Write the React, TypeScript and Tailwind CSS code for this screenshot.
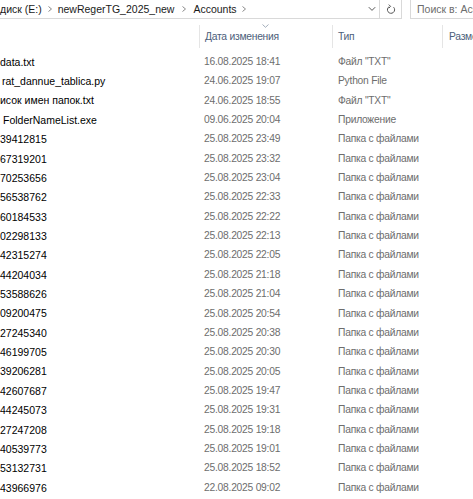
import React from "react";

const rows: [string, string, string, string][] = [
  ["data.txt", "16.08.2025 18:41", 'Файл "TXT"', "ml-0"],
  ["rat_dannue_tablica.py", "24.06.2025 19:07", "Python File", "ml-[2px]"],
  ["исок имен папок.txt", "24.06.2025 18:55", 'Файл "TXT"', "ml-0"],
  ["FolderNameList.exe", "09.06.2025 20:04", "Приложение", "ml-[3px]"],
  ["39412815", "25.08.2025 23:49", "Папка с файлами", "ml-0"],
  ["67319201", "25.08.2025 23:32", "Папка с файлами", "ml-0"],
  ["70253656", "25.08.2025 23:04", "Папка с файлами", "ml-0"],
  ["56538762", "25.08.2025 22:33", "Папка с файлами", "ml-0"],
  ["60184533", "25.08.2025 22:22", "Папка с файлами", "ml-0"],
  ["02298133", "25.08.2025 22:13", "Папка с файлами", "ml-0"],
  ["42315274", "25.08.2025 22:05", "Папка с файлами", "ml-0"],
  ["44204034", "25.08.2025 21:18", "Папка с файлами", "ml-0"],
  ["53588626", "25.08.2025 21:04", "Папка с файлами", "ml-0"],
  ["09200475", "25.08.2025 20:54", "Папка с файлами", "ml-0"],
  ["27245340", "25.08.2025 20:38", "Папка с файлами", "ml-0"],
  ["46199705", "25.08.2025 20:30", "Папка с файлами", "ml-0"],
  ["39206281", "25.08.2025 20:05", "Папка с файлами", "ml-0"],
  ["42607687", "25.08.2025 19:47", "Папка с файлами", "ml-0"],
  ["44245073", "25.08.2025 19:31", "Папка с файлами", "ml-0"],
  ["27247208", "25.08.2025 19:18", "Папка с файлами", "ml-0"],
  ["40539773", "25.08.2025 19:01", "Папка с файлами", "ml-0"],
  ["53132731", "25.08.2025 18:52", "Папка с файлами", "ml-0"],
  ["43966976", "22.08.2025 09:02", "Папка с файлами", "ml-0"],
];

function Chevron() {
  return (
    <svg width="6" height="8" viewBox="0 0 6 8" className="shrink-0">
      <path d="M1.5 1.5 L4.5 4 L1.5 6.5" fill="none" stroke="#8a8a8a" strokeWidth="1" />
    </svg>
  );
}

export default function App() {
  return (
    <div
      className="w-[473px] h-[499px] bg-white overflow-hidden text-[10.3px] leading-none tracking-[-0.25px]"
      style={{ fontFamily: '"Segoe UI", "Liberation Sans", Arial, sans-serif' }}
    >
      {/* Top bar */}
      <div className="flex h-[19px] items-stretch">
        <div className="flex w-[402px] items-center border-b border-r border-[#d9d9d9] text-[#1a1a1a] text-[10.5px] tracking-normal">
          <span className="whitespace-nowrap">диск (E:)</span>
          <span className="ml-[5px] mr-[5px]"><Chevron /></span>
          <span className="whitespace-nowrap">newRegerTG_2025_new</span>
          <span className="ml-[7px] mr-[6px]"><Chevron /></span>
          <span className="whitespace-nowrap">Accounts</span>
          <span className="ml-[4px]"><Chevron /></span>
          <div className="flex-1" />
          <svg width="8" height="6" viewBox="0 0 8 6" className="mr-[3px]">
            <path d="M0.8 1.2 L4 4.4 L7.2 1.2" fill="none" stroke="#555" strokeWidth="1" />
          </svg>
          <div className="h-full w-px bg-[#d9d9d9]" />
          <div className="flex w-[21px] items-center justify-center">
            <svg width="10" height="11" viewBox="0 0 10 11">
              <path d="M7.6 3.2 A3.6 3.6 0 1 1 3.2 2.6" fill="none" stroke="#555" strokeWidth="1" />
              <path d="M2.8 0.6 L4.6 2.4 L2.8 4.2" fill="none" stroke="#555" strokeWidth="1" />
            </svg>
          </div>
        </div>
        <div className="w-[8px]" />
        <div className="flex flex-1 items-center border border-t-0 border-r-0 border-[#d9d9d9] pl-[6px] text-[#6d6d6d] text-[10.5px] tracking-normal whitespace-nowrap overflow-hidden">
          Поиск в: Accounts
        </div>
      </div>

      {/* Header */}
      <div className="relative mt-[6px] flex h-[23px] items-center text-[#4c607a]">
        <div className="w-[199px]" />
        <div className="relative flex h-full w-[133px] items-center border-l border-[#e5e5e5] pl-[5px]">
          <span className="pt-[2px]">Дата изменения</span>
          <svg width="7" height="4" viewBox="0 0 7 4" className="absolute left-[62px] top-[-1px]">
            <path d="M0.5 0.5 L3.5 3.3 L6.5 0.5" fill="none" stroke="#9aa5b3" strokeWidth="0.9" />
          </svg>
        </div>
        <div className="flex h-full w-[110px] items-center border-l border-[#e5e5e5] pl-[5px]">
          <span className="pt-[2px]">Тип</span>
        </div>
        <div className="flex h-full flex-1 items-center border-l border-[#e5e5e5] pl-[6px] overflow-hidden whitespace-nowrap">
          <span className="pt-[2px]">Размер</span>
        </div>
      </div>

      {/* Rows */}
      <div className="mt-[4.3px] flex flex-col">
        {rows.map(([name, date, type, off]) => (
          <div key={name} className="flex h-[19.36px] items-center">
            <div className="w-[204px] overflow-hidden whitespace-nowrap text-black text-[10.5px] tracking-normal">
              <span className={`inline-block ${off}`}>{name}</span>
            </div>
            <div className="w-[134px] whitespace-nowrap text-[#6d6d6d]">{date}</div>
            <div className="flex-1 whitespace-nowrap text-[#6d6d6d]">{type}</div>
          </div>
        ))}
      </div>
    </div>
  );
}
